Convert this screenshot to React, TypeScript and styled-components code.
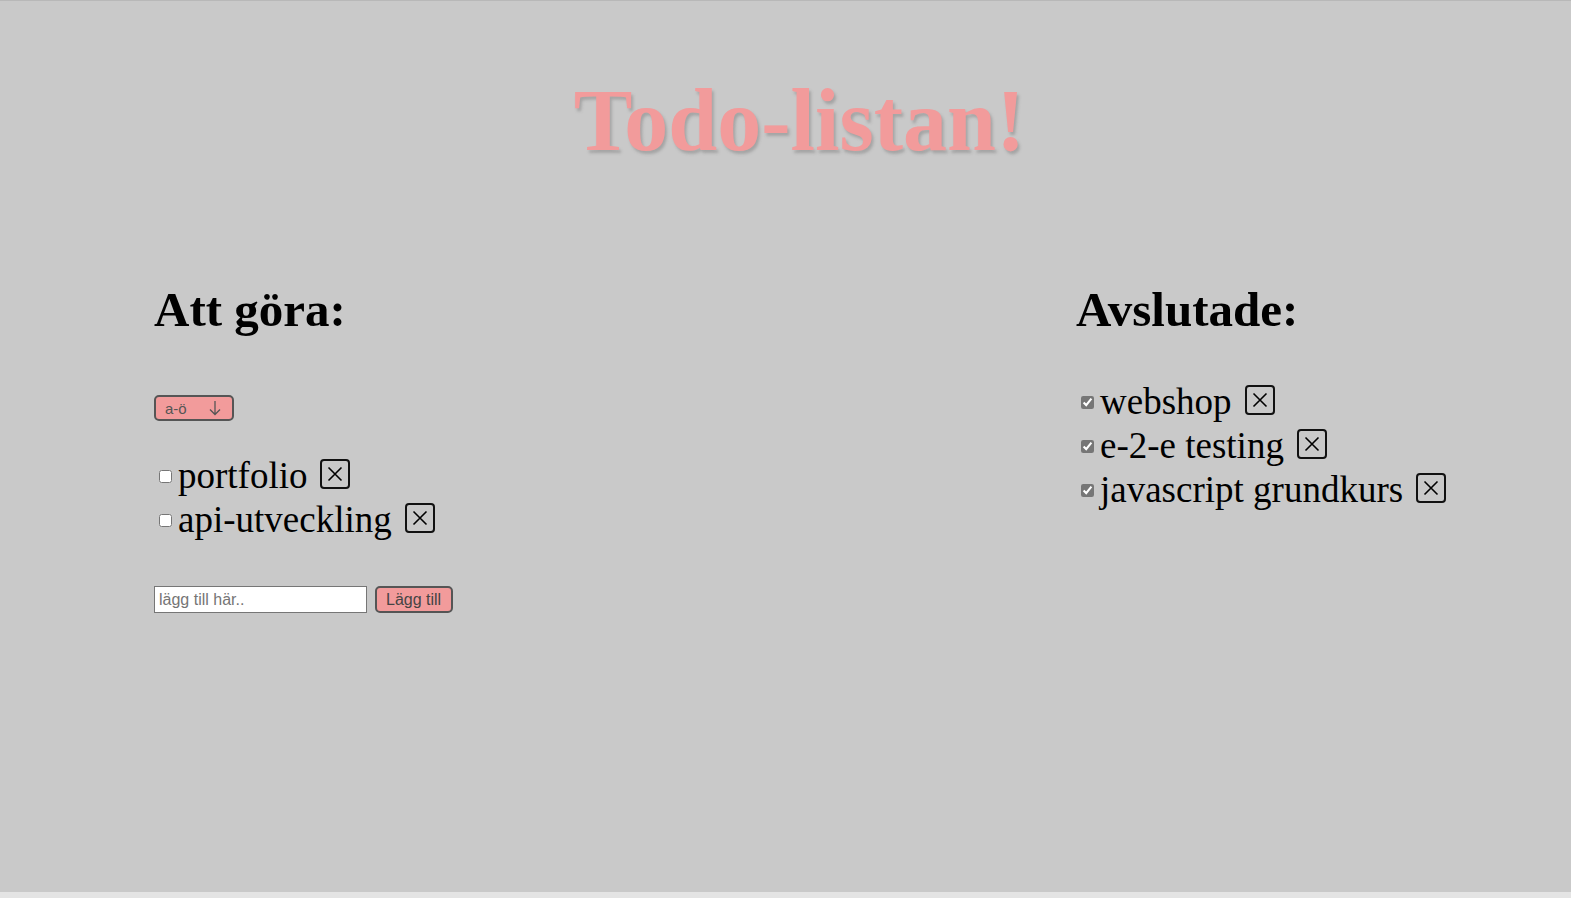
import React from "react";
import styled, { createGlobalStyle } from "styled-components";

const GlobalStyle = createGlobalStyle`
  html, body {
    margin: 0;
    padding: 0;
    background: #e4e4e4;
  }
  body {
    font-family: "Liberation Serif", "Times New Roman", serif;
  }
`;

const Page = styled.div`
  height: 891px;
  border-top: 1px solid #b8b8b8;
  background: #c9c9c9;
  box-sizing: content-box;
`;

const Title = styled.h1`
  margin: 0;
  padding: 68px 0 0 28px;
  text-align: center;
  font-family: "Liberation Serif", "Times New Roman", serif;
  font-weight: 700;
  font-size: 88px;
  line-height: 104px;
  color: #f29b9b;
  text-shadow: 2px 3px 3px rgba(120, 120, 120, 0.45);
`;

const Columns = styled.div`
  display: grid;
  grid-template-columns: 922px 1fr;
  padding: 107px 0 0 154px;
`;

const Column = styled.section`
  display: flex;
  flex-direction: column;
  align-items: flex-start;
`;

const Heading = styled.h2`
  margin: 0;
  font-family: "Liberation Serif", "Times New Roman", serif;
  font-weight: 700;
  font-size: 49px;
  line-height: 60px;
  color: #000;
`;

const SortButton = styled.button`
  margin-top: 55px;
  display: flex;
  align-items: center;
  gap: 22px;
  height: 26px;
  padding: 0 11px 0 9px;
  background: #f29b9b;
  border: 2px solid #555;
  border-radius: 5px;
  font-family: "Liberation Sans", Arial, sans-serif;
  font-size: 15px;
  color: #555;
  cursor: pointer;
`;

const List = styled.ul<{ $top: number }>`
  list-style: none;
  margin: ${(p) => p.$top}px 0 0 0;
  padding: 0;
  display: flex;
  flex-direction: column;
  gap: 14px;
`;

const Item = styled.li`
  display: flex;
  align-items: center;
  height: 30px;
  font-family: "Liberation Serif", "Times New Roman", serif;
  font-size: 37px;
  color: #000;
`;

const Check = styled.input`
  width: 13px;
  height: 13px;
  margin: 5px 6px 0 5px;
  accent-color: #767676;
`;

const Label = styled.span`
  line-height: 30px;
  padding-top: 4px;
`;

const DeleteButton = styled.button`
  margin-left: 13px;
  width: 30px;
  height: 30px;
  padding: 0;
  display: flex;
  align-items: center;
  justify-content: center;
  background: transparent;
  border: 2px solid #111;
  border-radius: 4px;
  color: #000;
  cursor: pointer;
`;

const AddForm = styled.form`
  margin-top: 53px;
  display: flex;
  align-items: center;
  gap: 8px;
`;

const TextInput = styled.input`
  box-sizing: border-box;
  width: 213px;
  height: 27px;
  padding: 1px 4px;
  border: 1px solid #767676;
  background: #fff;
  font-family: "Liberation Sans", Arial, sans-serif;
  font-size: 16px;
  color: #000;
  &::placeholder {
    color: #757575;
  }
`;

const AddButton = styled.button`
  box-sizing: border-box;
  height: 27px;
  padding: 0 10px 0 9px;
  background: #f29b9b;
  border: 2px solid #555;
  border-radius: 5px;
  font-family: "Liberation Sans", Arial, sans-serif;
  font-size: 16px;
  color: #444;
  cursor: pointer;
`;

const XIcon = () => (
  <svg width="18" height="18" viewBox="0 0 18 18" fill="none" stroke="#000" strokeWidth="1.6">
    <path d="M2.5 2.5 L15.5 15.5 M15.5 2.5 L2.5 15.5" />
  </svg>
);

const ArrowDown = () => (
  <svg width="12" height="16" viewBox="0 0 12 16" fill="none" stroke="#555" strokeWidth="1.3">
    <path d="M6 1 V14.5 M1 9.5 L6 14.5 L11 9.5" />
  </svg>
);

const todos = ["portfolio", "api-utveckling"];
const done = ["webshop", "e-2-e testing", "javascript grundkurs"];

export default function App() {
  return (
    <>
      <GlobalStyle />
      <Page>
        <Title>Todo-listan!</Title>
        <Columns>
          <Column>
            <Heading>Att göra:</Heading>
            <SortButton type="button">
              <span>a-ö</span>
              <ArrowDown />
            </SortButton>
            <List $top={38}>
              {todos.map((t) => (
                <Item key={t}>
                  <Check type="checkbox" readOnly />
                  <Label>{t}</Label>
                  <DeleteButton type="button" aria-label="Ta bort">
                    <XIcon />
                  </DeleteButton>
                </Item>
              ))}
            </List>
            <AddForm onSubmit={(e) => e.preventDefault()}>
              <TextInput placeholder="lägg till här.." />
              <AddButton type="submit">Lägg till</AddButton>
            </AddForm>
          </Column>
          <Column>
            <Heading>Avslutade:</Heading>
            <List $top={45}>
              {done.map((t) => (
                <Item key={t}>
                  <Check type="checkbox" checked readOnly />
                  <Label>{t}</Label>
                  <DeleteButton type="button" aria-label="Ta bort">
                    <XIcon />
                  </DeleteButton>
                </Item>
              ))}
            </List>
          </Column>
        </Columns>
      </Page>
    </>
  );
}
